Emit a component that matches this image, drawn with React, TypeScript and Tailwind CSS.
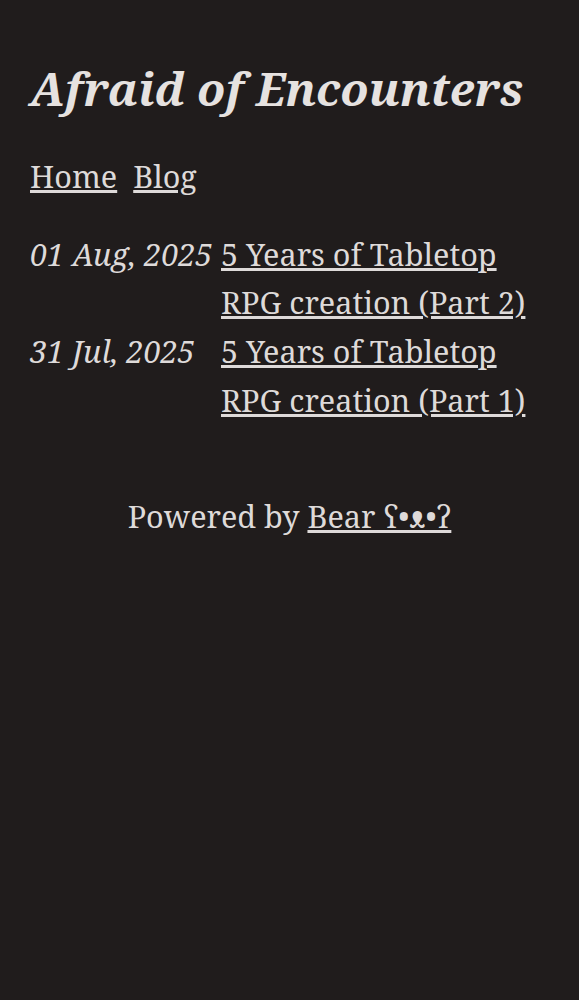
export default function App() {
  const posts = [
    { date: "01 Aug, 2025", title: "5 Years of Tabletop RPG creation (Part 2)" },
    { date: "31 Jul, 2025", title: "5 Years of Tabletop RPG creation (Part 1)" },
  ];

  return (
    <div
      className="min-h-[1000px] bg-[#201c1c] text-[#dedad9] px-[30px] pt-[56px]"
      style={{ fontFamily: '"Noto Serif", "DejaVu Serif", serif' }}
    >
      <header>
        <h1 className="text-[46px] leading-[64px] font-bold italic text-[#e6e2e0]">
          Afraid of Encounters
        </h1>
        <nav className="mt-[32px] text-[30.6px] leading-[48.7px]">
          <a href="#" className="underline mr-[16px]">Home</a>
          <a href="#" className="underline">Blog</a>
        </nav>
      </header>
      <main className="mt-[29px]">
        <ul className="text-[30.6px] leading-[48.7px]">
          {posts.map((p) => (
            <li key={p.date} className="flex">
              <span className="italic w-[191px] shrink-0">{p.date}</span>
              <a href="#" className="underline">{p.title}</a>
            </li>
          ))}
        </ul>
      </main>
      <footer className="mt-[67px] text-center text-[30.6px] leading-[48.7px]">
        Powered by <a href="#" className="underline">Bear ʕ•ᴥ•ʔ</a>
      </footer>
    </div>
  );
}
